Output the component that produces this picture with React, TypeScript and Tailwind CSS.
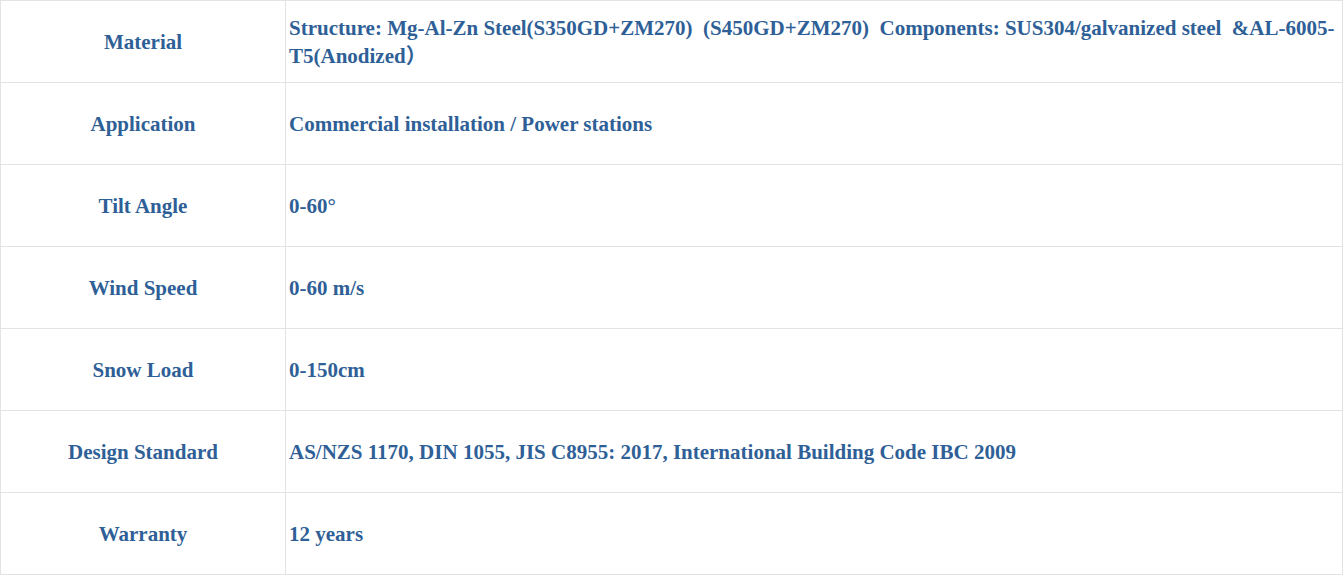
import React from "react";

const rows: [string, string][] = [
  ["Material", "Structure: Mg-Al-Zn Steel(S350GD+ZM270)\u00a0\u00a0(S450GD+ZM270)\u00a0\u00a0Components: SUS304/galvanized steel\u00a0\u00a0&AL-6005-T5(Anodized\uff09"],
  ["Application", "Commercial installation / Power stations"],
  ["Tilt Angle", "0-60°"],
  ["Wind Speed", "0-60 m/s"],
  ["Snow Load", "0-150cm"],
  ["Design Standard", "AS/NZS 1170, DIN 1055, JIS C8955: 2017, International Building Code IBC 2009"],
  ["Warranty", "12 years"],
];

export default function App() {
  return (
    <div className="bg-white w-[1344px] h-[575px]" style={{ fontFamily: '"Liberation Serif", "Times New Roman", "Noto Sans CJK SC", serif' }}>
      <table className="border-collapse w-[1343px] table-fixed">
        <colgroup>
          <col className="w-[285px]" />
          <col />
        </colgroup>
        <tbody>
          {rows.map(([k, v]) => (
            <tr key={k} className="h-[82px]">
              <td className="border border-[#e3e3e3] text-center align-middle font-bold text-[21px] leading-[28px] text-[#2f5f97] p-0">
                {k}
              </td>
              <td className="border border-[#e3e3e3] align-middle font-bold text-[21px] leading-[28px] text-[#2f5f97] pl-[3px] pr-0 py-0">
                {v}
              </td>
            </tr>
          ))}
        </tbody>
      </table>
    </div>
  );
}
